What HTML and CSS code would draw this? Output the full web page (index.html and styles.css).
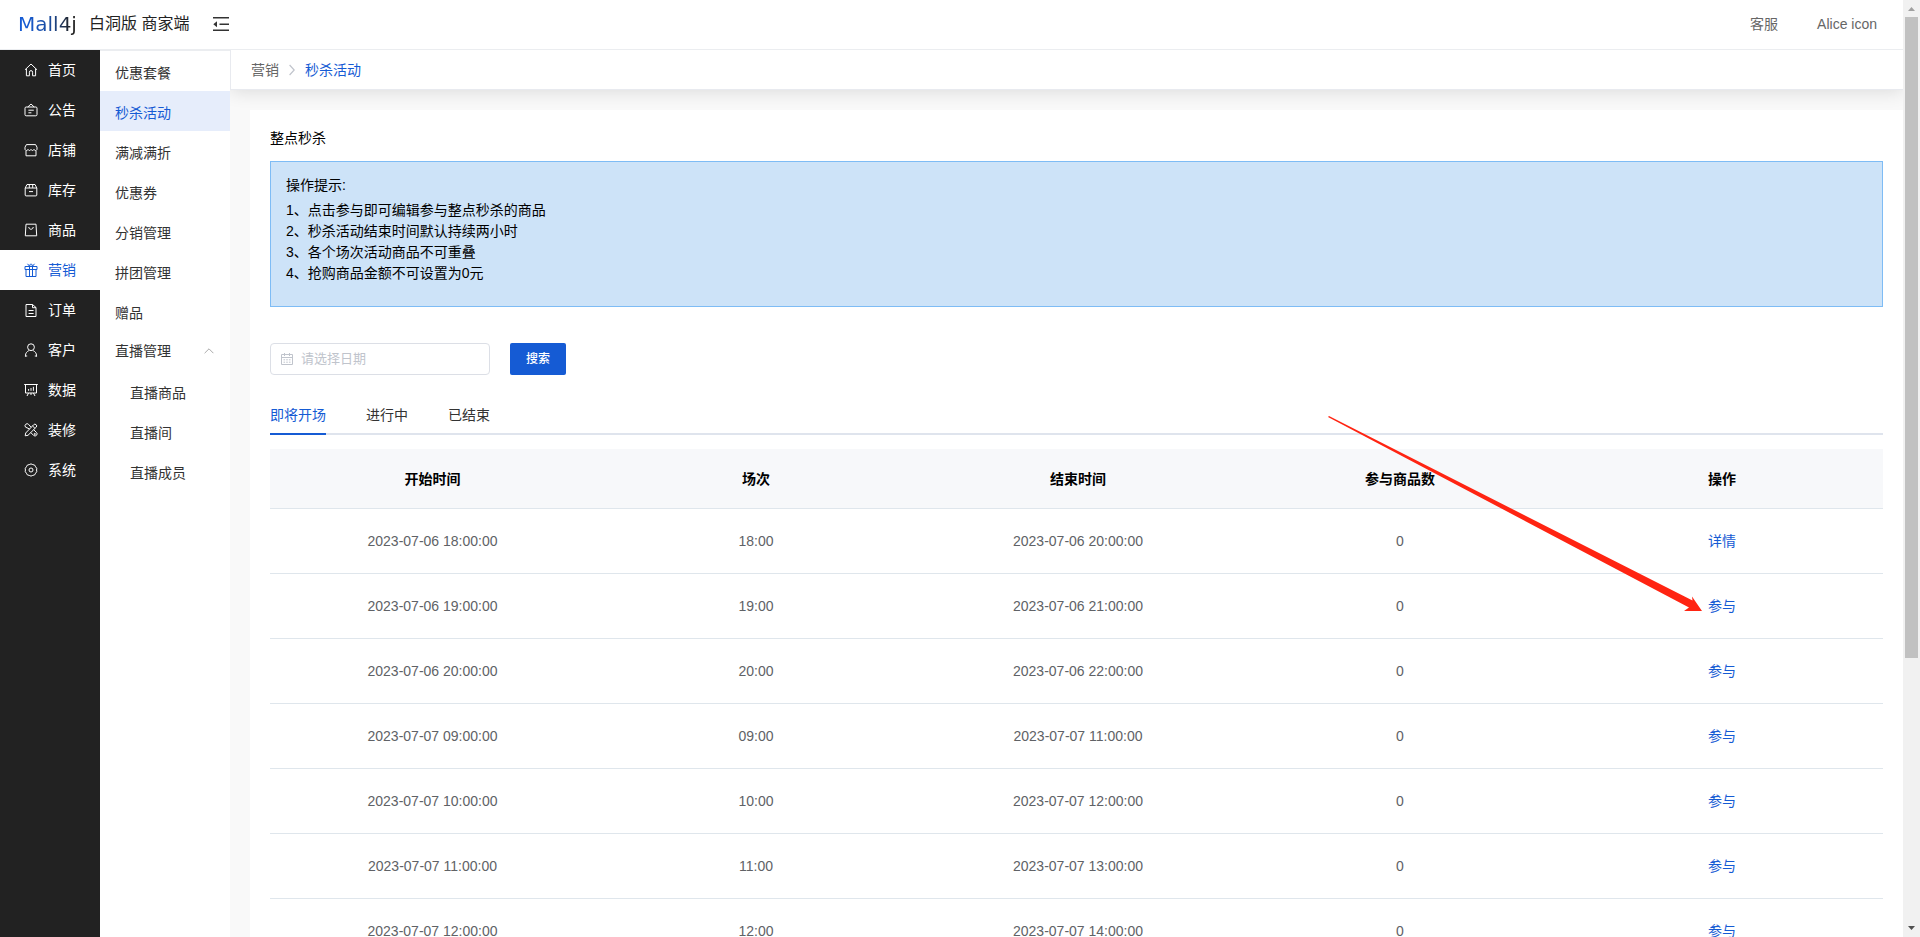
FILE: index.html
```html
<!DOCTYPE html>
<html lang="zh-CN">
<head>
<meta charset="utf-8">
<title>秒杀活动</title>
<link rel="stylesheet" href="styles.css">
</head>
<body>
<div class="app">
  <header class="header">
    <a class="logo" href="#">Mall4j</a>
    <span class="brand">白洞版 商家端</span>
    <button class="fold" type="button" aria-label="收起菜单">
      <svg viewBox="0 0 16 16" width="16" height="16" fill="none" stroke="#333" stroke-width="1.5"><path d="M0 1.75h16M6.5 8.25H16M0 14.25h16"/><path d="M4 5.2v6L.3 8.2z" fill="#333" stroke="none"/></svg>
    </button>
    <nav class="header-links">
      <a href="#">客服</a>
      <a href="#">Alice icon</a>
    </nav>
  </header>
  <div class="body">
    <nav class="sidebar">
      <a class="side-item" href="#"><svg class="icon" viewBox="0 0 14 14"><path d="M1 6.8 7 1l6 5.8M2.4 5.8v7h3V9.2a1.6 1.6 0 0 1 3.2 0v3.6h3v-7"/></svg>首页</a>
      <a class="side-item" href="#"><svg class="icon" viewBox="0 0 14 14"><rect x="1" y="4" width="12" height="8.8" rx="1.2"/><path d="M3.8 4 7 1l3.2 3M4.4 7.2h5.4M4.4 9.8h3"/></svg>公告</a>
      <a class="side-item" href="#"><svg class="icon" viewBox="0 0 14 14"><path d="M2.4 1.6h9.2L13 4.2v2.2c-.8 1.5-2.4 1.5-3 0-.8 1.5-2.2 1.5-3 0-.8 1.5-2.2 1.5-3 0-.6 1.5-2.2 1.5-3 0V4.2zM2 7.6v5.2h10V7.6"/></svg>店铺</a>
      <a class="side-item" href="#"><svg class="icon" viewBox="0 0 14 14"><path d="M1.2 5v7a.9.9 0 0 0 .9.9h9.8a.9.9 0 0 0 .9-.9V5L11 1.5H3zM1.2 5h11.6M5.3 1.5v3.4M8.7 1.5v3.4M5 8.6h4"/></svg>库存</a>
      <a class="side-item" href="#"><svg class="icon" viewBox="0 0 14 14"><path d="M2 1.2h10l.7 11.6H1.3zM4.8 4c0 3 4.4 3 4.4 0"/></svg>商品</a>
      <a class="side-item side-item-active" href="#"><svg class="icon" viewBox="0 0 14 14"><path d="M1 3.5h12v3H1zM2 6.500v7h10v-7M5.500 3.500v10M8.500 3.500v10M5.500 3.200 3.500.8M5.500 3.200 6.500.8M8.500 3.200 7.500.8M8.500 3.200 10.500.8"/></svg>营销</a>
      <a class="side-item" href="#"><svg class="icon" viewBox="0 0 14 14"><path d="M2 1.500h6.500l3.500 3v9H2zM8.500 1.500v3.200H12M4.600 7.500h5M4.600 10.500h5"/></svg>订单</a>
      <a class="side-item" href="#"><svg class="icon" viewBox="0 0 14 14"><circle cx="7" cy="4.200" r="3.400"/><path d="M1.400 13.500c0-4 2-5.200 3.800-6M12.600 13.500c0-4-2-5.200-3.800-6M1 13h2.200M10.800 13H13"/></svg>客户</a>
      <a class="side-item" href="#"><svg class="icon" viewBox="0 0 14 14"><path d="M.2 1.500h13.600M1.500 1.500v8.500h11V1.500M4.600 7.800V6M7 7.800V5M9.400 7.800V3.800M4.600 10l-1.600 3M9.400 10l1.600 3M7 10v2"/></svg>数据</a>
      <a class="side-item" href="#"><svg class="icon" viewBox="0 0 14 14"><path d="M1.200 12.800l.5-2.800L9.600 1.800a1.700 1.700 0 0 1 2.600 2.400L4 12.300zM5.600 6 1.600 4.200a1.900 1.900 0 0 1 3-2.800L7 4.200M9.600 6.600l2.800 2.800a2 2 0 0 1-2.800 3L6.800 9.600M8.600 3l2.400 2.400"/><circle cx="10.800" cy="11" r=".6"/></svg>装修</a>
      <a class="side-item" href="#"><svg class="icon" viewBox="0 0 14 14"><path d="M5.200 1.600Q7 .2 8.800 1.600 11.200 1.600 11.600 3.800 13.400 5.200 12.600 7 13.400 8.800 11.600 10.200 11.200 12.400 8.800 12.400 7 13.800 5.200 12.400 2.800 12.400 2.400 10.200.6 8.800 1.400 7 .6 5.200 2.400 3.800 2.800 1.600 5.200 1.600z"/><circle cx="7" cy="7" r="2"/></svg>系统</a>
    </nav>
    <nav class="submenu">
      <a class="sub-item" href="#">优惠套餐</a>
      <a class="sub-item sub-item-active" href="#">秒杀活动</a>
      <a class="sub-item" href="#">满减满折</a>
      <a class="sub-item" href="#">优惠券</a>
      <a class="sub-item" href="#">分销管理</a>
      <a class="sub-item" href="#">拼团管理</a>
      <a class="sub-item" href="#">赠品</a>
      <button class="sub-title" type="button">直播管理<svg viewBox="0 0 10 6" width="10" height="6" fill="none" stroke="#aaa"><path d="M.6 5.2 5 .8l4.4 4.4"/></svg></button>
      <a class="sub-item sub-item-child" href="#">直播商品</a>
      <a class="sub-item sub-item-child" href="#">直播间</a>
      <a class="sub-item sub-item-child" href="#">直播成员</a>
    </nav>
    <main class="main">
      <nav class="breadcrumb">
        <a href="#">营销</a>
        <svg viewBox="0 0 6 12" width="6" height="12" fill="none" stroke="#c0c4cc" stroke-width="1.2"><path d="M.6 1 5.2 6 .6 11"/></svg>
        <a class="breadcrumb-current" href="#">秒杀活动</a>
      </nav>
      <section class="card">
        <h1 class="card-title">整点秒杀</h1>
        <div class="tips">
          <p class="tips-title">操作提示:</p>
          <p>1、点击参与即可编辑参与整点秒杀的商品</p>
          <p>2、秒杀活动结束时间默认持续两小时</p>
          <p>3、各个场次活动商品不可重叠</p>
          <p>4、抢购商品金额不可设置为0元</p>
        </div>
        <form class="search">
          <label class="date-box">
            <svg viewBox="0 0 12 12" width="12" height="12" fill="none" stroke="#c0c4cc"><path d="M.5 1.5h11v10H.5zM.5 4.5h11M3.5 0v3M8.5 0v3M2.5 6.8h1.6M5.2 6.8h1.6M7.9 6.8h1.6M2.5 9.2h1.6M5.2 9.2h1.6M7.9 9.2h1.6"/></svg>
            <input class="date-input" type="text" placeholder="请选择日期" aria-label="日期">
          </label>
          <button class="search-button" type="button">搜索</button>
        </form>
        <div class="tabs" role="tablist">
          <button class="tab tab-active" type="button" role="tab" aria-selected="true">即将开场</button>
          <button class="tab" type="button" role="tab" aria-selected="false">进行中</button>
          <button class="tab" type="button" role="tab" aria-selected="false">已结束</button>
        </div>
        <table class="table">
          <thead>
            <tr><th class="col-start">开始时间</th><th>场次</th><th>结束时间</th><th>参与商品数</th><th>操作</th></tr>
          </thead>
          <tbody>
            <tr><td>2023-07-06 18:00:00</td><td>18:00</td><td>2023-07-06 20:00:00</td><td>0</td><td><a href="#">详情</a></td></tr>
            <tr><td>2023-07-06 19:00:00</td><td>19:00</td><td>2023-07-06 21:00:00</td><td>0</td><td><a href="#">参与</a></td></tr>
            <tr><td>2023-07-06 20:00:00</td><td>20:00</td><td>2023-07-06 22:00:00</td><td>0</td><td><a href="#">参与</a></td></tr>
            <tr><td>2023-07-07 09:00:00</td><td>09:00</td><td>2023-07-07 11:00:00</td><td>0</td><td><a href="#">参与</a></td></tr>
            <tr><td>2023-07-07 10:00:00</td><td>10:00</td><td>2023-07-07 12:00:00</td><td>0</td><td><a href="#">参与</a></td></tr>
            <tr><td>2023-07-07 11:00:00</td><td>11:00</td><td>2023-07-07 13:00:00</td><td>0</td><td><a href="#">参与</a></td></tr>
            <tr><td>2023-07-07 12:00:00</td><td>12:00</td><td>2023-07-07 14:00:00</td><td>0</td><td><a href="#">参与</a></td></tr>
          </tbody>
        </table>
      </section>
    </main>
  </div>
</div>
<div class="scrollbar" aria-hidden="true">
  <svg viewBox="0 0 17 17" width="17" height="17"><path d="M5 11h7L8.500 7z" fill="#a0a0a0"/></svg>
  <div class="scroll-track"><div class="scroll-thumb"></div></div>
  <svg viewBox="0 0 17 17" width="17" height="17"><path d="M5 6h7L8.500 10z" fill="#505050"/></svg>
</div>
<svg class="arrow" viewBox="0 0 376 198" width="376" height="198" aria-hidden="true"><path d="M0 1 1 0 364.500 184.500 364 180.500 374 195H356L361 191.500z" fill="#ff2412"/></svg>
</body>
</html>
```
FILE: styles.css
```css
* {
  box-sizing: border-box;
}

body {
  display: flex;
  height: 100vh;
  margin: 0;
  overflow: hidden;
  font: 14px/20px "Liberation Sans", "Noto Sans CJK SC", sans-serif;
  color: #333;
  background: #fff;
}

a {
  color: inherit;
  text-decoration: none;
}

button {
  padding: 0;
  border: 0;
  background: none;
  color: inherit;
  font: inherit;
  cursor: pointer;
}

p {
  margin: 0;
}

.app {
  display: flex;
  flex: 1;
  flex-direction: column;
  min-width: 0;
}

/* Header */
.header {
  display: flex;
  flex: none;
  align-items: center;
  height: 50px;
  padding: 0 26px 1px 18px;
  border-bottom: 1px solid #ebedf0;
}

.logo {
  width: 71px;
  font: 20px/28px "DejaVu Sans", sans-serif;
  background: linear-gradient(90deg, #155bd4 10%, #1b4b9c 45%, #222 75%);
  background-clip: text;
  -webkit-background-clip: text;
  color: transparent;
}

.brand {
  font-size: 16px;
  color: #222;
}

.fold {
  display: flex;
  margin-left: 24px;
}

.header-links {
  display: flex;
  gap: 39px;
  margin-left: auto;
  color: #666;
}

.body {
  display: flex;
  flex: 1;
  min-height: 0;
}

/* Primary navigation */
.sidebar {
  flex: none;
  width: 100px;
  background: #222;
  color: #fff;
}

.side-item {
  display: flex;
  align-items: center;
  gap: 10px;
  height: 40px;
  padding-left: 24px;
}

.side-item-active {
  background: #fff;
  color: #155bd4;
}

.icon {
  width: 14px;
  height: 14px;
  fill: none;
  stroke: currentColor;
  stroke-width: 1;
  stroke-linejoin: round;
}

/* Secondary navigation */
.submenu {
  flex: none;
  width: 130px;
  border-top: 1px solid #ebedf0;
}

.sub-item {
  display: block;
  height: 40px;
  padding: 12px 0 0 15px;
}

.sub-item-active {
  background: #e6edfb;
  color: #155bd4;
}

.sub-item-child {
  padding-left: 30px;
}

.sub-title {
  display: flex;
  align-items: center;
  justify-content: space-between;
  width: 100%;
  height: 40px;
  padding: 0 16px 0 15px;
}

/* Content */
.main {
  flex: 1;
  min-width: 0;
  overflow: hidden;
  background: #f9f9f9;
}

.breadcrumb {
  display: flex;
  align-items: center;
  gap: 10px;
  height: 40px;
  padding-left: 20px;
  border-bottom: 1px solid #e8eaef;
  border-left: 1px solid #e8eaef;
  background: #fff;
  box-shadow: 0 2px 18px rgba(0, 0, 0, 0.12);
  color: #666;
}

.breadcrumb-current {
  color: #155bd4;
}

.card {
  position: relative;
  margin: 20px 0 0 20px;
  padding: 18px 20px;
  background: #fff;
}

.card-title {
  margin: 0 0 13px;
  font-size: 14px;
  font-weight: 400;
  color: #000;
}

.tips {
  height: 146px;
  padding: 13px 15px;
  border: 1px solid #7ebcf5;
  background: #cde3f8;
  line-height: 21px;
  color: #000;
}

.tips-title {
  margin-bottom: 4px;
}

.search {
  display: flex;
  gap: 20px;
  margin-top: 36px;
}

.date-box {
  display: flex;
  align-items: center;
  gap: 8px;
  width: 220px;
  height: 32px;
  padding: 0 10px;
  border: 1px solid #dcdfe6;
  border-radius: 4px;
}

.date-input {
  flex: 1;
  min-width: 0;
  padding: 0;
  border: 0;
  outline: 0;
  font: 13px/20px "Liberation Sans", "Noto Sans CJK SC", sans-serif;
}

.date-input::placeholder {
  color: #c0c4cc;
}

.search-button {
  width: 56px;
  height: 32px;
  border-radius: 2px;
  background: #155bd4;
  font-size: 12px;
  font-weight: 500;
  color: #fff;
}

.tabs {
  display: flex;
  gap: 40px;
  height: 40px;
  margin-top: 20px;
  box-shadow: inset 0 -2px #dfe4ed;
}

.tab-active {
  border-top: 2px solid transparent;
  border-bottom: 2px solid #155bd4;
  color: #155bd4;
}

.table {
  width: 100%;
  margin-top: 14px;
  border-spacing: 0;
  table-layout: fixed;
  text-align: center;
  color: #606266;
}

.table th {
  height: 60px;
  padding: 0;
  border-bottom: 1px solid #dfe6ec;
  background: #f7f8fa;
  font-weight: 700;
  color: #000;
}

.table .col-start {
  width: 325px;
}

.table td {
  height: 65px;
  padding: 0;
  border-bottom: 1px solid #dfe6ec;
}

.table a {
  color: #155bd4;
}

/* Annotation laid over the table */
.arrow {
  position: absolute;
  top: 416px;
  right: 216px;
}

/* Window scrollbar */
.scrollbar {
  display: flex;
  flex: none;
  flex-direction: column;
  width: 17px;
  background: #f1f1f1;
}

.scroll-track {
  flex: 1;
  padding: 0 2px;
}

.scroll-thumb {
  height: 71%;
  background: #c1c1c1;
}
```
